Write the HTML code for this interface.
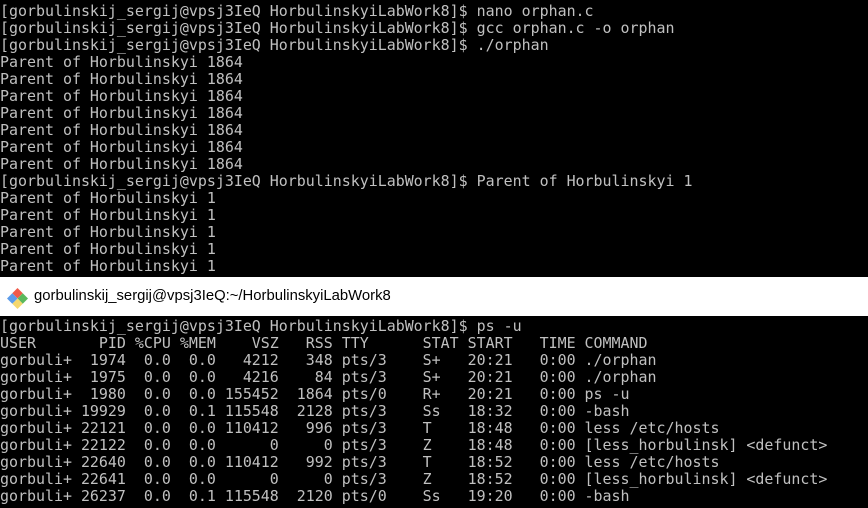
<!DOCTYPE html>
<html><head><meta charset="utf-8"><style>
html,body{margin:0;padding:0;background:#000;width:868px;height:508px;overflow:hidden;position:relative}
pre{margin:0;position:absolute;left:0;font-family:"DejaVu Sans Mono","Liberation Mono",monospace;font-size:14.95px;line-height:17px;color:#c0c0c0;white-space:pre}
#bar{position:absolute;left:0;top:277px;width:868px;height:39px;background:#fff}
#bar span{position:absolute;left:34px;top:11px;font-family:"Liberation Sans",sans-serif;font-size:14.85px;color:#000}
</style></head><body>
<pre style="top:3px">[gorbulinskij_sergij@vpsj3IeQ HorbulinskyiLabWork8]$ nano orphan.c
[gorbulinskij_sergij@vpsj3IeQ HorbulinskyiLabWork8]$ gcc orphan.c -o orphan
[gorbulinskij_sergij@vpsj3IeQ HorbulinskyiLabWork8]$ ./orphan
Parent of Horbulinskyi 1864
Parent of Horbulinskyi 1864
Parent of Horbulinskyi 1864
Parent of Horbulinskyi 1864
Parent of Horbulinskyi 1864
Parent of Horbulinskyi 1864
Parent of Horbulinskyi 1864
[gorbulinskij_sergij@vpsj3IeQ HorbulinskyiLabWork8]$ Parent of Horbulinskyi 1
Parent of Horbulinskyi 1
Parent of Horbulinskyi 1
Parent of Horbulinskyi 1
Parent of Horbulinskyi 1
Parent of Horbulinskyi 1
~/ .</pre>
<div id="bar">
<svg style="position:absolute;left:7px;top:11px" width="21" height="21" viewBox="0 0 20 20">
<polygon points="10,0 15,5 10,10 5,5" fill="#f05a4a"/>
<polygon points="15,5 20,10 15,15 10,10" fill="#5cb85c"/>
<polygon points="10,10 15,15 10,20 5,15" fill="#f5d76e"/>
<polygon points="5,5 10,10 5,15 0,10" fill="#5b9bea"/>
</svg>
<span>gorbulinskij_sergij@vpsj3IeQ:~/HorbulinskyiLabWork8</span>
</div>
<pre style="top:318px">[gorbulinskij_sergij@vpsj3IeQ HorbulinskyiLabWork8]$ ps -u
USER       PID %CPU %MEM    VSZ   RSS TTY      STAT START   TIME COMMAND
gorbuli+  1974  0.0  0.0   4212   348 pts/3    S+   20:21   0:00 ./orphan
gorbuli+  1975  0.0  0.0   4216    84 pts/3    S+   20:21   0:00 ./orphan
gorbuli+  1980  0.0  0.0 155452  1864 pts/0    R+   20:21   0:00 ps -u
gorbuli+ 19929  0.0  0.1 115548  2128 pts/3    Ss   18:32   0:00 -bash
gorbuli+ 22121  0.0  0.0 110412   996 pts/3    T    18:48   0:00 less /etc/hosts
gorbuli+ 22122  0.0  0.0      0     0 pts/3    Z    18:48   0:00 [less_horbulinsk] &lt;defunct&gt;
gorbuli+ 22640  0.0  0.0 110412   992 pts/3    T    18:52   0:00 less /etc/hosts
gorbuli+ 22641  0.0  0.0      0     0 pts/3    Z    18:52   0:00 [less_horbulinsk] &lt;defunct&gt;
gorbuli+ 26237  0.0  0.1 115548  2120 pts/0    Ss   19:20   0:00 -bash</pre>
</body></html>
